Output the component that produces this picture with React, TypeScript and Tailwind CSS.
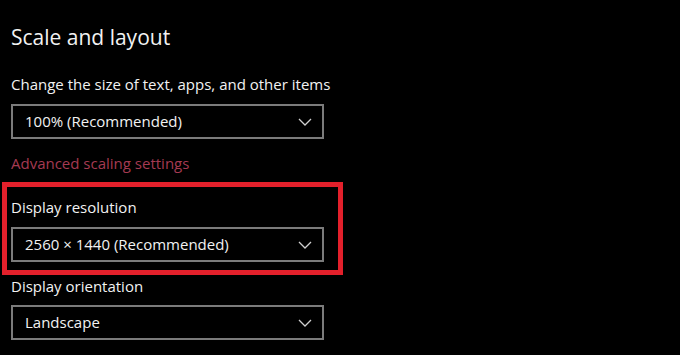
import React from 'react'

const font = { fontFamily: '"Open Sans", "Noto Sans", sans-serif' }

function Chevron() {
  return (
    <svg width="14" height="8" viewBox="0 0 14 8" fill="none" className="text-[#cfcfcf]">
      <path d="M1 1l6 6 6-6" stroke="currentColor" strokeWidth="1.3" />
    </svg>
  )
}

function Dropdown({ value }: { value: string }) {
  return (
    <div className="flex h-[35px] w-[313px] items-center justify-between border-2 border-[#7b7b7b] pl-[12px] pr-[10px]">
      <span className="text-[15px] text-[#f2f2f2]">{value}</span>
      <Chevron />
    </div>
  )
}

export default function App() {
  return (
    <div className="h-[355px] w-[680px] overflow-hidden bg-black pl-[11px]" style={font}>
      <h1 className="pt-[23px] text-[21px] leading-[28px] text-[#f2f2f2]">Scale and layout</h1>

      <p className="mt-[23px] text-[15px] leading-[20px] text-[#f2f2f2]">
        Change the size of text, apps, and other items
      </p>
      <div className="mt-[10px]">
        <Dropdown value="100% (Recommended)" />
      </div>

      <p className="mt-[14px] text-[15px] leading-[20px] text-[#a53a52]">Advanced scaling settings</p>

      {/* highlighted block */}
      <div className="-ml-[9px] mt-[9px] w-[341px] border-[5px] border-[#e3202b] pb-[8px] pl-[4px] pt-[10px]">
        <p className="text-[15px] leading-[20px] text-[#f2f2f2]">Display resolution</p>
        <div className="mt-[10px]">
          <Dropdown value="2560 × 1440 (Recommended)" />
        </div>
      </div>

      <p className="mt-[1px] text-[15px] leading-[20px] text-[#f2f2f2]">Display orientation</p>
      <div className="mt-[9px]">
        <Dropdown value="Landscape" />
      </div>
    </div>
  )
}
